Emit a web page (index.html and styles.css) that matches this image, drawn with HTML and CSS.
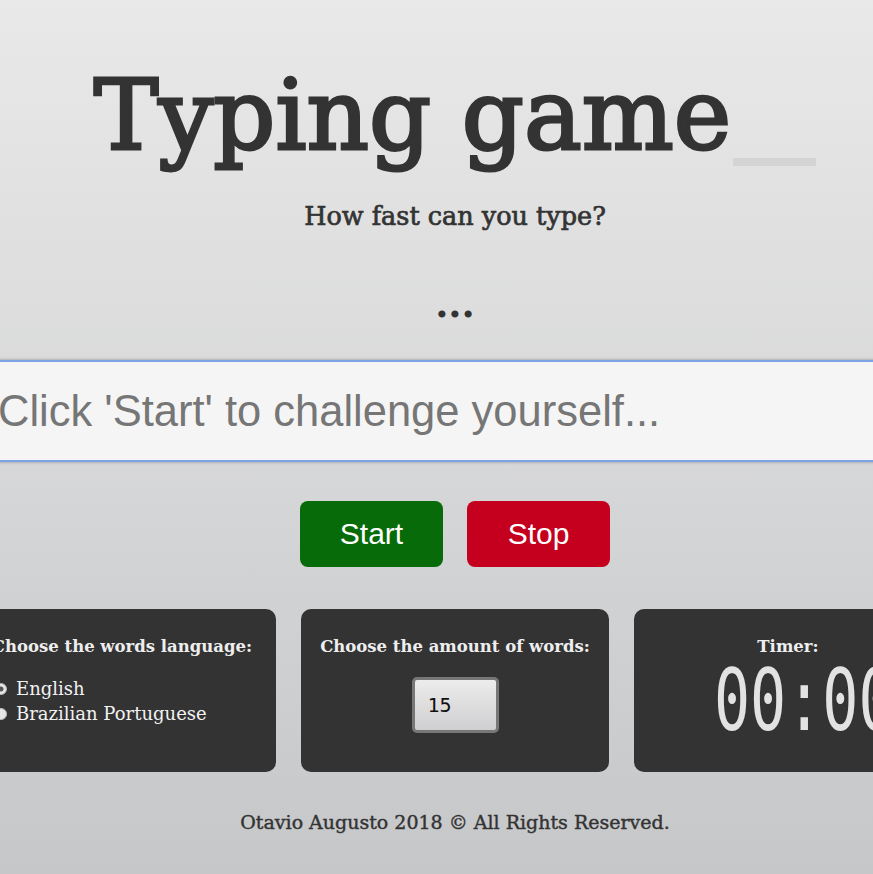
FILE: index.html
```html
<!DOCTYPE html>
<html lang="en">
<head>
<meta charset="utf-8">
<title>Typing game</title>
<link rel="stylesheet" href="styles.css">
</head>
<body>
<div class="page">
  <header class="header">
    <h1 class="title">Typing game<span class="cursor"></span></h1>
    <p class="subtitle">How fast can you type?</p>
  </header>
  <p class="word">...</p>
  <input class="typing" type="text" placeholder="Click 'Start' to challenge yourself...">
  <div class="actions">
    <button class="btn btn-start">Start</button>
    <button class="btn btn-stop">Stop</button>
  </div>
  <section class="panels">
    <div class="panel panel-lang">
      <h3 class="panel-title">Choose the words language:</h3>
      <ul class="options">
        <li class="option"><span class="radio checked"></span>English</li>
        <li class="option"><span class="radio"></span>Brazilian Portuguese</li>
      </ul>
    </div>
    <div class="panel">
      <h3 class="panel-title">Choose the amount of words:</h3>
      <input class="amount" type="number" value="15">
    </div>
    <div class="panel">
      <h3 class="panel-title">Timer:</h3>
      <div class="timer">00:00</div>
    </div>
  </section>
  <footer class="footer">Otavio Augusto 2018 © All Rights Reserved.</footer>
</div>
</body>
</html>
```
FILE: styles.css
```css
html, body {
  margin: 0;
  padding: 0;
}
body {
  min-height: 874px;
  overflow: hidden;
  background: linear-gradient(#e9e9e9, #c6c7c9);
  font-family: "DejaVu Serif", serif;
  color: #333;
}
.page {
  width: 974px;
  margin-left: -32px;
  padding-top: 58px;
  display: flex;
  flex-direction: column;
  align-items: center;
}
.header {
  text-align: center;
}
.title {
  margin: 0;
  font-size: 97px;
  line-height: 116px;
  font-weight: normal;
  color: #333;
  -webkit-text-stroke: 3px #333;
  white-space: nowrap;
}
.cursor {
  display: inline-block;
  width: 83px;
  height: 8px;
  margin-left: 2px;
  background: #d4d4d4;
  vertical-align: -17px;
  -webkit-text-stroke: 0;
}
.subtitle {
  margin: 27px 0 0;
  font-size: 25.5px;
  line-height: 30px;
  color: #333;
  -webkit-text-stroke: 0.7px #333;
}
.word {
  margin: 48px 0 0;
  font-size: 38px;
  line-height: 50px;
  font-weight: bold;
  color: #333;
}
.typing {
  box-sizing: border-box;
  width: 100%;
  height: 102px;
  margin-top: 31px;
  padding: 0 0 0 28px;
  border: 2px solid #7ba3e6;
  background: #f5f5f5;
  box-shadow: 0 0 3px rgba(0, 0, 0, 0.35);
  font-family: "Liberation Sans", Arial, sans-serif;
  font-size: 43.5px;
  color: #333;
  outline: none;
}
.typing::placeholder {
  color: #767676;
}
.actions {
  display: flex;
  gap: 24px;
  margin-top: 39px;
}
.btn {
  width: 143px;
  height: 66px;
  border: none;
  border-radius: 8px;
  color: #fff;
  font-family: "Liberation Sans", Arial, sans-serif;
  font-size: 30px;
  padding: 0;
}
.btn-start {
  background: #066b08;
}
.btn-stop {
  background: #c5001e;
}
.panels {
  display: grid;
  grid-template-columns: repeat(3, 308px);
  gap: 25px;
  margin-top: 42px;
}
.panel {
  height: 163px;
  box-sizing: border-box;
  padding: 26px 0 0;
  background: #333;
  border-radius: 10px;
  display: flex;
  flex-direction: column;
  align-items: center;
  color: #eee;
}
.panel-title {
  margin: 0;
  font-size: 16.5px;
  line-height: 24px;
  font-weight: bold;
  color: #eee;
  white-space: nowrap;
}
.panel-lang {
  align-items: stretch;
}
.panel-lang .panel-title {
  text-align: center;
}
.options {
  list-style: none;
  margin: 17px 0 0;
  padding: 0 0 0 27px;
}
.option {
  display: flex;
  align-items: center;
  gap: 9px;
  font-size: 18px;
  line-height: 25px;
  color: #f2f2f2;
}
.radio {
  width: 12px;
  height: 12px;
  border-radius: 50%;
  background: #e6e6e6;
  box-sizing: border-box;
  border: 1px solid #bbb;
}
.radio.checked {
  background: radial-gradient(circle, #555 0 2px, #e6e6e6 3px);
}
.amount {
  box-sizing: border-box;
  width: 87px;
  height: 56px;
  margin-top: 18px;
  padding: 0 0 0 13px;
  border: 3px solid #777;
  border-radius: 5px;
  background: linear-gradient(#ececec, #cfcfd1);
  font-family: "DejaVu Sans Mono", monospace;
  font-size: 20px;
  color: #111;
  -moz-appearance: textfield;
}
.amount::-webkit-inner-spin-button,
.amount::-webkit-outer-spin-button {
  -webkit-appearance: none;
  margin: 0;
}
.timer {
  margin-top: 15px;
  margin-left: 80px;
  align-self: flex-start;
  font-family: "DejaVu Sans Mono", monospace;
  font-size: 60px;
  line-height: 70px;
  color: #e2e2e2;
  transform: scaleY(1.43);
  transform-origin: left 56px;
  white-space: nowrap;
}
.footer {
  margin-top: 38px;
  font-size: 19px;
  line-height: 24px;
  color: #333;
  -webkit-text-stroke: 0.4px #333;
}
```
